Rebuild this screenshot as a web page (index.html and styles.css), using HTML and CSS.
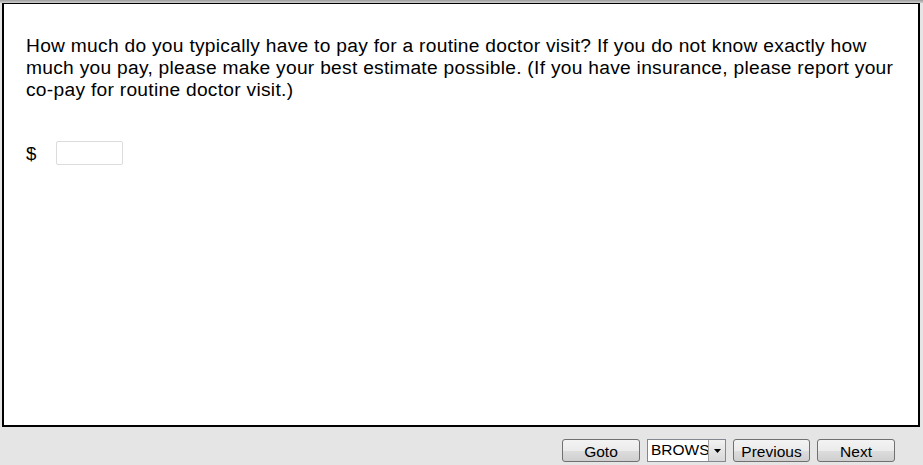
FILE: index.html
```html
<!DOCTYPE html>
<html lang="en">
<head>
  <meta charset="UTF-8" />
  <title>Survey Question</title>
  <link rel="stylesheet" href="styles.css">
</head>
<body>
  <div class="top-strip"></div>
  <div class="page">
    <div class="question">
      <p class="question-text">How much do you typically have to pay for a routine doctor visit? If you do not know exactly how much you pay, please make your best estimate possible. (If you have insurance, please report your co-pay for routine doctor visit.)</p>
      <div class="answer">
        <span class="currency">$</span>
        <input type="text" class="amount" />
      </div>
    </div>
  </div>
  <div class="nav-bar">
    <button class="nav-btn goto">Goto</button>
    <div class="select-box">
      <span class="select-value">BROWSE</span>
      <span class="select-arrow"><svg width="7" height="4" viewBox="0 0 7 4"><path d="M0 0H7L3.5 4Z" fill="#000"/></svg></span>
    </div>
    <button class="nav-btn previous">Previous</button>
    <button class="nav-btn next">Next</button>
  </div>
</body>
</html>
```

FILE: styles.css
```css
body {
  margin: 0;
  padding: 0;
  background-color: #e5e5e5;
  font-family: "Liberation Sans", Arial, sans-serif;
  color: #000;
  width: 923px;
  height: 465px;
  overflow: hidden;
}
.top-strip {
  height: 3px;
  background: linear-gradient(#9c9c9c, #cfcfcf);
}
.page {
  padding: 0 3px 0 2px;
}
.question {
  height: 421px;
  background-color: #fff;
  border: 2px solid #000;
  border-top-width: 1px;
  padding: 0 16px 0 22px;
}
.question-text {
  margin: 31px 0 0;
  font-size: 19.2px;
  letter-spacing: 0.28px;
  line-height: 22px;
}
.answer {
  display: flex;
  align-items: center;
  margin-top: 40px;
}
.currency {
  font-size: 18.65px;
  width: 30px;
  padding-top: 2px;
}
.amount {
  box-sizing: border-box;
  width: 67px;
  height: 24px;
  padding: 0 2px;
  border: 1px solid #dcdcdc;
  border-radius: 2px;
  font-size: 15px;
}
.nav-bar {
  display: flex;
  justify-content: flex-end;
  align-items: center;
  gap: 7px;
  padding: 12px 28px 0 0;
}
.nav-btn {
  height: 23px;
  width: 78px;
  padding: 0;
  border: 1px solid #707070;
  border-radius: 3px;
  background: linear-gradient(#f3f3f3 0%, #ebebeb 50%, #dddddd 51%, #cfcfcf 100%);
  font-family: "Liberation Sans", Arial, sans-serif;
  font-size: 15.5px;
  color: #000;
  padding-top: 2px;
}
.previous {
  width: 77px;
}
.select-box {
  display: flex;
  height: 21px;
  width: 77px;
  border: 1px solid #828790;
  background-color: #fff;
}
.select-value {
  flex: 1;
  overflow: hidden;
  white-space: nowrap;
  font-size: 15.5px;
  line-height: 20px;
  padding-left: 3px;
}
.select-arrow {
  width: 16px;
  display: flex;
  align-items: center;
  justify-content: center;
  border-left: 1px solid #a0a0a0;
  background: linear-gradient(#f2f2f2, #d8d8d8);
}
```
